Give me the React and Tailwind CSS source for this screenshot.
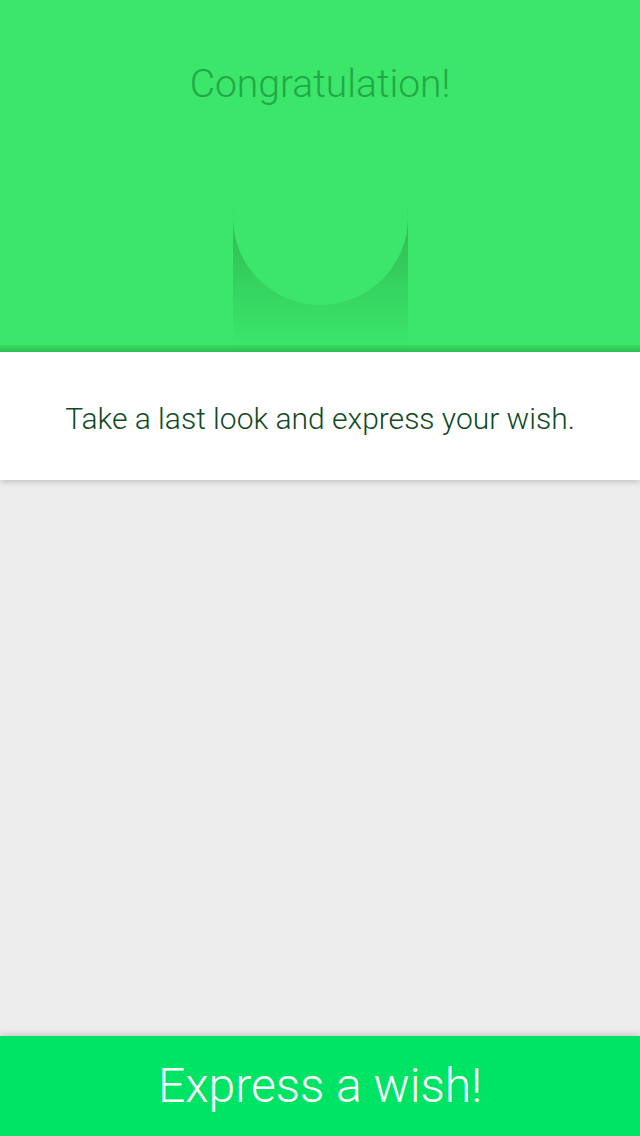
export default function App() {
  return (
    <div
      className="w-[640px] h-[1136px] flex flex-col bg-[#ededed] overflow-hidden"
      style={{ fontFamily: 'Roboto, "Liberation Sans", sans-serif' }}
    >
      <div className="h-[352px] bg-[#3be66a] flex flex-col items-center relative">
        <h1 className="mt-[60px] text-[39px] leading-[48px] font-light text-[#22a845]">
          Congratulation!
        </h1>
        <div className="mt-auto w-[175px] h-[135px] mb-[7px] relative overflow-hidden bg-gradient-to-b from-[#2fb851] via-[#35d05f] to-[#3be66a]">
          <div className="absolute left-0 top-[-80px] w-[175px] h-[175px] rounded-full bg-[#3be66a]" />
        </div>
        <div className="absolute bottom-0 left-0 right-0 h-[7px] bg-gradient-to-b from-[#37d863] to-[#31c457]" />
      </div>

      <div className="h-[128px] bg-white flex items-center justify-center relative z-10 shadow-[0_2px_6px_rgba(0,0,0,0.18)]">
        <p className="text-[30px] font-light text-[#0f4a1f] pt-[4px]">
          Take a last look and express your wish.
        </p>
      </div>

      <div className="flex-1" />

      <button className="h-[100px] bg-[#00e466] text-white text-[48px] font-light flex items-center justify-center shadow-[0_-2px_6px_rgba(0,0,0,0.15)]">
        Express a wish!
      </button>
    </div>
  )
}
